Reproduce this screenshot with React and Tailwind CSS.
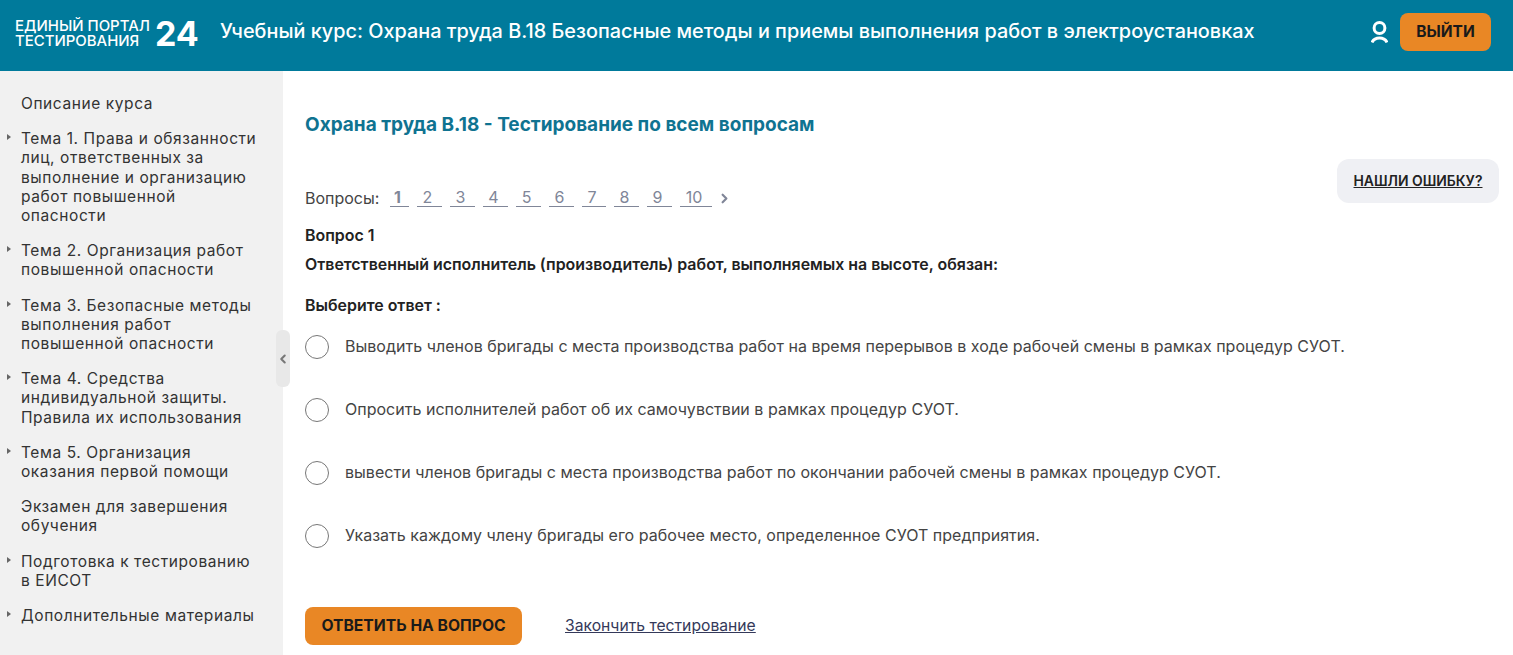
import { ChevronLeft, ChevronRight } from 'lucide-react';

const menu = [
  { text: ['Описание курса'], arrow: false },
  { text: ['Тема 1. Права и обязанности', 'лиц, ответственных за', 'выполнение и организацию', 'работ повышенной', 'опасности'], arrow: true },
  { text: ['Тема 2. Организация работ', 'повышенной опасности'], arrow: true },
  { text: ['Тема 3. Безопасные методы', 'выполнения работ', 'повышенной опасности'], arrow: true },
  { text: ['Тема 4. Средства', 'индивидуальной защиты.', 'Правила их использования'], arrow: true },
  { text: ['Тема 5. Организация', 'оказания первой помощи'], arrow: true },
  { text: ['Экзамен для завершения', 'обучения'], arrow: false },
  { text: ['Подготовка к тестированию', 'в ЕИСОТ'], arrow: true },
  { text: ['Дополнительные материалы'], arrow: true },
];

const answers = [
  'Выводить членов бригады с места производства работ на время перерывов в ходе рабочей смены в рамках процедур СУОТ.',
  'Опросить исполнителей работ об их самочувствии в рамках процедур СУОТ.',
  'вывести членов бригады с места производства работ по окончании рабочей смены в рамках процедур СУОТ.',
  'Указать каждому члену бригады его рабочее место, определенное СУОТ предприятия.',
];

const pages = [
  { n: '1', w: 'w-[19px]' },
  { n: '2', w: 'w-[25px]' },
  { n: '3', w: 'w-[25px]' },
  { n: '4', w: 'w-[25px]' },
  { n: '5', w: 'w-[25px]' },
  { n: '6', w: 'w-[25px]' },
  { n: '7', w: 'w-[24px]' },
  { n: '8', w: 'w-[25px]' },
  { n: '9', w: 'w-[25px]' },
  { n: '10', w: 'w-[32px]' },
];

function UserIcon() {
  return (
    <svg width="17" height="22" viewBox="0 0 17 22" fill="none" stroke="white" strokeWidth="3">
      <circle cx="8.5" cy="7" r="5.4" />
      <path d="M1 21.5 C3.5 15.5 13.5 15.5 16 21.5" />
    </svg>
  );
}

export default function App() {
  return (
    <div className="h-[655px] overflow-hidden bg-white font-['Inter',sans-serif] text-[#222222]">
      <header className="flex h-[71px] items-center bg-[#007a9b] pb-[7px] pl-[15px] pr-[22px] text-white">
        <div className="flex w-[205px] items-center">
          <div className="mt-[3px] text-[14.95px] font-medium leading-[15px]">
            <div>ЕДИНЫЙ ПОРТАЛ</div>
            <div>ТЕСТИРОВАНИЯ</div>
          </div>
          <span className="ml-[5px] mt-[3px] text-[34px] font-bold leading-none">24</span>
        </div>
        <div className="text-[19.85px] font-medium">
          Учебный курс: Охрана труда В.18 Безопасные методы и приемы выполнения работ в электроустановках
        </div>
        <div className="ml-auto flex items-center gap-[12px]">
          <UserIcon />
          <button className="h-[38px] w-[91px] rounded-lg bg-[#e98725] text-[15.5px] font-bold text-[#1a1a1a]">ВЫЙТИ</button>
        </div>
      </header>

      <div className="flex h-[584px]">
        <aside className="relative w-[283px] shrink-0 bg-[#f1f1f1] pl-[21px] pt-[23px] text-[15.5px] leading-[19.2px] tracking-[0.58px] text-[#333333]">
          {menu.map((item) => (
            <div key={item.text[0]} className="relative mb-[16px]">
              {item.arrow && (
                <span className="absolute left-[-14px] top-[5px] h-0 w-0 border-y-[3.5px] border-l-[4px] border-y-transparent border-l-[#666666]" />
              )}
              {item.text.map((line) => (
                <div key={line} className="whitespace-nowrap">{line}</div>
              ))}
            </div>
          ))}
          <div className="absolute left-[276px] top-[259px] flex h-[57px] w-[14px] items-center justify-center rounded-md bg-[#e8e8e8]">
            <ChevronLeft size={16} strokeWidth={3.5} className="text-[#777777]" />
          </div>
        </aside>

        <main className="relative min-w-0 flex-1 pl-[22px] pt-[42px]">
          <h1 className="text-[19px] font-bold leading-[24px] text-[#0f7391]">Охрана труда В.18 - Тестирование по всем вопросам</h1>

          <button className="absolute right-[14px] top-[88px] h-[44px] w-[162px] rounded-xl bg-[#eff0f4] text-[13.9px] font-semibold text-[#222222] underline">
            НАШЛИ ОШИБКУ?
          </button>

          <div className="mt-[49px] flex h-[24px] items-center text-[16px] text-[#444444]">
            <span className="w-[85px]">Вопросы:</span>
            {pages.map((p, i) => (
              <span key={p.n} className={`mr-[8px] border-b border-[#808698] pr-[4px] text-center leading-[17px] text-[#808698] ${p.w} ${i === 0 ? 'font-bold' : ''}`}>
                {p.n}
              </span>
            ))}
            <ChevronRight size={15} strokeWidth={3.5} className="-ml-[3px] text-[#808698]" />
          </div>

          <div className="mt-[16px] text-[15.93px] font-semibold leading-[20px]">Вопрос 1</div>
          <div className="mt-[9px] text-[15.93px] font-semibold leading-[20px]">
            Ответственный исполнитель (производитель) работ, выполняемых на высоте, обязан:
          </div>
          <div className="mt-[21px] text-[15.93px] font-semibold leading-[20px]">Выберите ответ :</div>

          <div className="mt-[19px] flex flex-col gap-[39px]">
            {answers.map((a) => (
              <label key={a} className="flex h-[24px] items-center">
                <span className="h-[24px] w-[24px] shrink-0 rounded-full border border-[#777777] bg-white" />
                <span className="ml-[16px] -translate-y-[1px] text-[16px] tracking-[0.02px] text-[#444444]">{a}</span>
              </label>
            ))}
          </div>

          <div className="mt-[59px] flex items-center">
            <button className="h-[38px] w-[217px] rounded-lg bg-[#e98725] text-[15.7px] font-bold text-[#1a1a1a]">ОТВЕТИТЬ НА ВОПРОС</button>
            <a className="ml-[43px] text-[15.7px] text-[#34395a] underline">Закончить тестирование</a>
          </div>
        </main>
      </div>
    </div>
  );
}
